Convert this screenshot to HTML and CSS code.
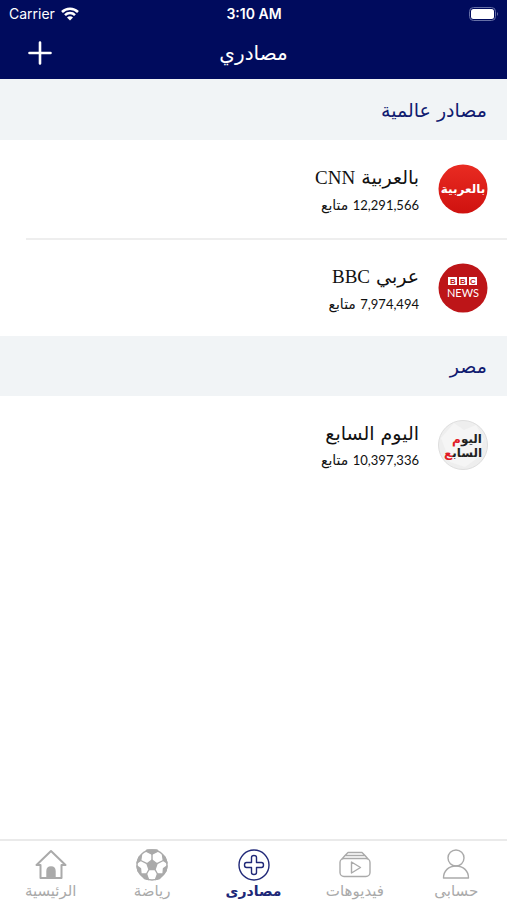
FILE: index.html
```html
<!DOCTYPE html>
<html lang="ar" dir="rtl">
<head>
<meta charset="utf-8">
<meta name="viewport" content="width=device-width, initial-scale=1">
<title>مصادري</title>
<link rel="stylesheet" href="styles.css">
</head>
<body>
<header class="top">
  <div class="status" dir="ltr">
    <div class="carrier"><span>Carrier</span>
      <svg width="18" height="14" viewBox="0 0 18 14" fill="none" stroke="#fff" stroke-width="2.5"><path d="M1 5a11.3 11.3 0 0 1 16 0M4 8.2a7 7 0 0 1 10 0"/><path d="M9 13.6 6 10.6a4.2 4.2 0 0 1 6 0z" fill="#fff" stroke="none"/></svg>
    </div>
    <span class="clock">3:10 AM</span>
    <div class="battery"><svg width="30" height="14" viewBox="0 0 30 14"><rect x=".5" y=".5" width="26" height="13" rx="4" fill="none" stroke="#6670a6"/><rect x="2" y="2" width="23" height="10" rx="2.5" fill="#fff"/><path d="M28 5q2 2 0 4z" fill="#6670a6"/></svg></div>
  </div>
  <div class="nav">
    <h1>مصادري</h1>
    <button class="add" type="button" aria-label="إضافة"><svg width="24" height="24" viewBox="0 0 24 24" stroke="#fff" stroke-width="2.6" stroke-linecap="round"><path d="M12 1.5v21M1.500 12h21"/></svg></button>
  </div>
</header>
<main>
  <section>
    <h2>مصادر عالمية</h2>
    <ul>
      <li>
        <svg class="logo" viewBox="0 0 50 50"><defs><linearGradient id="red" x2="0" y2="1"><stop stop-color="#e92b22"/><stop offset="1" stop-color="#cf120f"/></linearGradient></defs><circle cx="25" cy="25" r="24.500" fill="url(#red)"/><text class="logo-ar" x="25" y="29" fill="#fff" font-size="12" text-anchor="middle">بالعربية</text></svg>
        <div class="info"><h3>بالعربية <span class="latin">CNN</span></h3><p><span class="num">12,291,566</span> متابع</p></div>
      </li>
      <li>
        <svg class="logo" viewBox="0 0 50 50" direction="ltr"><circle cx="25" cy="25" r="24.500" fill="#bd1518"/><path d="M10 14h9v8h-9zM21 14h8v8h-8zM31 14h8v8h-8z" fill="#fff"/><text class="logo-news" x="25" y="34" fill="#fff" font-size="11" text-anchor="middle">NEWS</text><g class="logo-bbc" fill="#bd1518" font-size="8" text-anchor="middle"><text x="15" y="21">B</text><text x="25" y="21">B</text><text x="35" y="21">C</text></g></svg>
        <div class="info"><h3>عربي <span class="latin">BBC</span></h3><p><span class="num">7,974,494</span> متابع</p></div>
      </li>
    </ul>
  </section>
  <section>
    <h2>مصر</h2>
    <ul>
      <li>
        <svg class="logo" viewBox="0 0 50 50"><circle cx="25" cy="25" r="24.500" fill="#eee" stroke="#dedede"/><path d="M3 18 16 3l10 7 12-5 8 14-5 18-14 10-15-5z" fill="#f5f5f5"/><g class="logo-ar" font-size="12" text-anchor="middle"><text x="29" y="23" fill="#222">اليو<tspan fill="#e11b25">م</tspan></text><text x="25" y="37" fill="#222">الساب<tspan fill="#e11b25">ع</tspan></text></g></svg>
        <div class="info"><h3>اليوم السابع</h3><p><span class="num">10,397,336</span> متابع</p></div>
      </li>
    </ul>
  </section>
</main>
<nav class="tabs">
  <a href="#account"><svg viewBox="0 0 32 32"><circle cx="16" cy="9" r="8"/><path d="M3.500 29c0-7 5-12 12.500-12s12.500 5 12.500 12z"/></svg><span>حسابى</span></a>
  <a href="#videos"><svg viewBox="0 0 32 32"><rect x="1" y="9.500" width="30" height="18" rx="4"/><path d="M3 10 6 6.500h20l3 3.500M6 6.500l3-3h14l3 3M12.500 13v11l9-5.500z"/></svg><span>فيديوهات</span></a>
  <a class="active" href="#sources" aria-current="page"><svg viewBox="0 0 32 32"><circle cx="16" cy="16" r="15"/><path d="M13.500 8.500q0-2 2.500-2t2.500 2v5h5q2 0 2 2.500t-2 2.500h-5v5q0 2-2.500 2t-2.500-2v-5h-5q-2 0-2-2.500t2-2.500h5z"/></svg><span>مصادرى</span></a>
  <a href="#sports"><svg viewBox="0 0 32 32"><circle cx="16" cy="16" r="15"/><path class="solid" d="m16 11 5 3.700-2 5.800h-6l-2-5.800zM10 2.200 16 5.200l6-3-1-1.200H11zM1 14l3.700-2.500L5.500 6 3 8zM31 14l-3.700-2.500L26.500 6 29 8zM5 25l5.500 0 2 5.500-4-1zM27 25h-5.500l-2 5.500 4-1zM1 17l3.500 2.500.5 5.500L2 22zM31 17l-3.500 2.500-.5 5.500 3-3z"/><path d="M16 11V5M21 14.700l6.300-3.200M19 20.500l2.500 4.500M13 20.500 10.500 25M11 14.700l-6.300-3.200"/></svg><span>رياضة</span></a>
  <a href="#home"><svg viewBox="0 0 32 32"><path stroke-width="2" d="M5.500 16H1.500L16 2l14.500 14h-4v13h-21z"/><path class="solid" d="M12 29v-7q0-4 4-4t4 4v7z"/></svg><span>الرئيسية</span></a>
</nav>
</body>
</html>
```

FILE: styles.css
```css
* { box-sizing: border-box; }
body {
  margin: 0;
  min-height: 100vh;
  display: flex;
  flex-direction: column;
  background: #fff;
  color: #111;
  font-family: "DejaVu Sans", sans-serif;
}
h1, h2, h3, p, ul { margin: 0; padding: 0; font-weight: 400; }
ul { list-style: none; }
svg { display: block; }
.top { background: #000b5d; color: #fff; }
.status {
  display: grid;
  grid-template-columns: 1fr auto 1fr;
  align-items: center;
  height: 27px;
  padding: 0 8px 0 9px;
  font: 14px Inter, sans-serif;
}
.carrier { display: flex; align-items: center; gap: 6px; }
.clock { font-weight: 600; }
.battery { justify-self: end; }
.nav {
  display: grid;
  grid-template-columns: 1fr auto 1fr;
  align-items: center;
  height: 52px;
}
.nav h1 { grid-column: 2; font-size: 20px; line-height: 32px; }
.add {
  justify-self: end;
  margin: 0 0 0 24px;
  padding: 4px;
  border: 0;
  background: none;
}
main { flex: 1; }
h2 {
  padding: 14px 20px;
  background: #f1f4f6;
  color: #101b70;
  font-size: 19px;
  line-height: 32px;
}
section:first-child { border-top: 1px solid #f1f4f6; }
li {
  display: flex;
  align-items: center;
  gap: 19px;
  height: 98px;
  padding: 0 19px;
}
li + li { border-top: 2px solid #eee; margin-left: 26px; }
.logo { width: 50px; height: 50px; flex: none; }
.info { padding-top: 2px; }
h3 { font-size: 19px; line-height: 28px; }
p { font-size: 14px; line-height: 26px; }
.latin { font-family: "Liberation Serif", serif; font-size: 19px; }
.num { font-family: Lato, sans-serif; font-size: 13px; }
.logo-ar { font-family: "DejaVu Sans", sans-serif; font-weight: 700; }
.logo-news { font-family: Lato, sans-serif; }
.logo-bbc { font-family: "Liberation Sans", sans-serif; font-weight: 700; }
.tabs {
  display: grid;
  grid-template-columns: repeat(5, 1fr);
  height: 61px;
  padding-top: 8px;
  border-top: 2px solid #eaeaea;
}
.tabs a {
  display: flex;
  flex-direction: column;
  align-items: center;
  color: #aaa;
  font-size: 15px;
  line-height: 20px;
  text-decoration: none;
}
.tabs svg { width: 32px; height: 32px; fill: none; stroke: currentColor; stroke-width: 1.4; stroke-linejoin: round; }
.tabs .solid { fill: currentColor; }
.tabs .active { color: #202878; }
.active span { font-size: 14px; font-weight: 700; }
```
